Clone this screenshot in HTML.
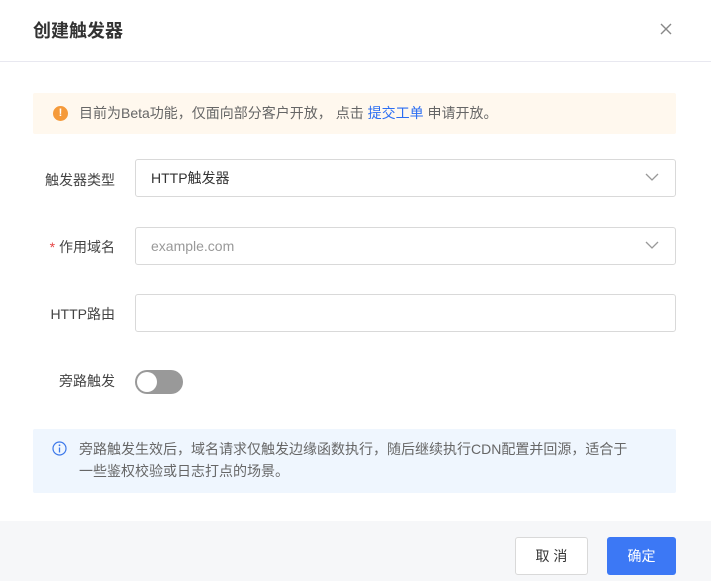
<!DOCTYPE html>
<html><head><meta charset="utf-8"><style>
*{box-sizing:border-box;margin:0;padding:0}
body{width:711px;height:581px;background:#fff;font-family:"Liberation Sans","Noto Sans CJK SC",sans-serif;position:relative;overflow:hidden;color:#333}
.abs{position:absolute}
.title{left:33px;top:17px;font-size:18px;font-weight:bold;color:#333}
.hr{left:0;top:61px;width:711px;height:1px;background:#e8e8f0}
.warn{left:33px;top:93px;width:643px;height:41px;background:#fff8ee;border-radius:2px;font-size:14px;color:#666;line-height:41px;padding-left:46px}
.ico{left:20px;top:13px;width:15px;height:15px;border-radius:50%;background:#f59a3a;color:#fff;font-size:11px;line-height:15px;text-align:center;font-weight:bold}
.lbl{font-size:14px;color:#444;text-align:right;width:110px;left:5px}
.inp{left:135px;width:541px;height:38px;border:1px solid #d9d9d9;border-radius:3px;font-size:14px;line-height:36px;padding-left:15px}
.chev{right:16px;top:12px}
.info{left:33px;top:429px;width:643px;height:64px;background:#eff6fe;border-radius:2px;font-size:14px;color:#666;line-height:22px;padding:9px 40px 0 46px}
.foot{left:0;top:521px;width:711px;height:60px;background:#f6f7f9}
.btn{top:537px;height:38px;border-radius:3px;font-size:14px;line-height:36px;text-align:center}
</style></head><body>
<div class="abs title">创建触发器</div>
<svg class="abs" style="left:660px;top:23px" width="12" height="12"><path d="M1 1L11 11M11 1L1 11" stroke="#888" stroke-width="1.4"/></svg>
<div class="abs hr"></div>
<div class="abs warn"><div class="abs ico">!</div>目前为Beta功能，仅面向部分客户开放， 点击 <span style="color:#2c6ef2">提交工单</span> 申请开放。</div>
<div class="abs lbl" style="top:170px">触发器类型</div>
<div class="abs inp" style="top:159px;color:#333">HTTP触发器<svg class="abs chev" width="14" height="10"><path d="M1 2L7 8L13 2" fill="none" stroke="#999" stroke-width="1.3"/></svg></div>
<div class="abs lbl" style="top:237px"><span style="color:#e54545">*</span> 作用域名</div>
<div class="abs inp" style="top:227px;color:#999">example.com<svg class="abs chev" width="14" height="10"><path d="M1 2L7 8L13 2" fill="none" stroke="#999" stroke-width="1.3"/></svg></div>
<div class="abs lbl" style="top:304px">HTTP路由</div>
<div class="abs inp" style="top:294px"></div>
<div class="abs lbl" style="top:371px">旁路触发</div>
<div class="abs" style="left:135px;top:370px;width:48px;height:24px;border-radius:12px;background:#999"><div class="abs" style="left:2px;top:2px;width:20px;height:20px;border-radius:50%;background:#fff"></div></div>
<div class="abs info"><svg class="abs" style="left:19px;top:12px" width="15" height="15"><circle cx="7.5" cy="7.5" r="6.5" fill="none" stroke="#3c78ea" stroke-width="1.2"/><path d="M7.5 6.5V11.5" stroke="#3c78ea" stroke-width="1.3"/><circle cx="7.5" cy="4.3" r=".9" fill="#3c78ea"/></svg>旁路触发生效后，域名请求仅触发边缘函数执行，随后继续执行CDN配置并回源，适合于一些鉴权校验或日志打点的场景。</div>
<div class="abs foot"></div>
<div class="abs btn" style="left:515px;width:73px;background:#fff;border:1px solid #d9d9d9;color:#333">取 消</div>
<div class="abs btn" style="left:607px;width:69px;background:#3c78f5;color:#fff;line-height:38px">确定</div>
</body></html>
